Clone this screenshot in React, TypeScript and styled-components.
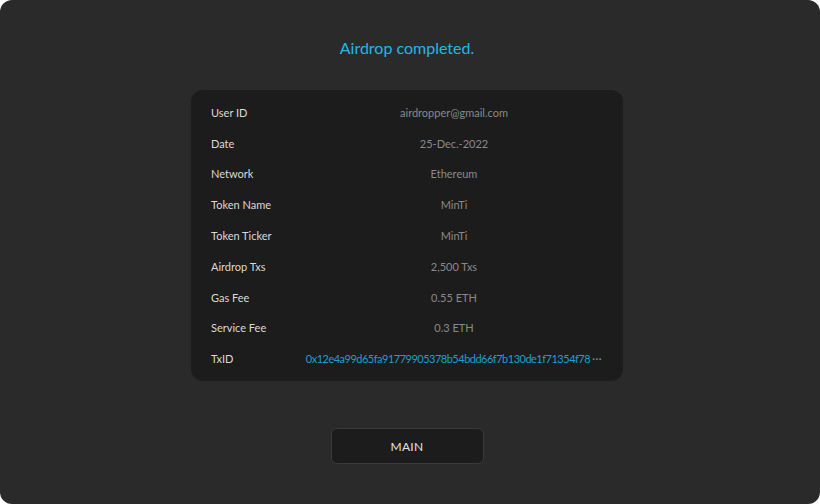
import React from 'react';
import styled, { createGlobalStyle } from 'styled-components';

const GlobalStyle = createGlobalStyle`
  html, body {
    margin: 0;
    padding: 0;
    background: #ffffff;
  }
  body {
    font-family: Lato, 'Noto Sans', sans-serif;
  }
`;

const Frame = styled.div`
  box-sizing: border-box;
  width: 820px;
  height: 504px;
  background: #2a2a2a;
  border-radius: 12px;
  display: flex;
  flex-direction: column;
  align-items: center;
  padding: 37px 6px 0 0;
`;

const Title = styled.h1`
  margin: 0;
  font-size: 16px;
  line-height: 22px;
  font-weight: 400;
  color: #27b5e6;
`;

const Card = styled.div`
  box-sizing: border-box;
  width: 432px;
  margin-top: 31px;
  padding: 7px 20px;
  background: #1c1c1c;
  border-radius: 12px;
  display: grid;
  grid-template-columns: 94px 1fr;
  grid-auto-rows: 30.8px;
  align-items: center;
`;

const Label = styled.div`
  font-size: 11px;
  color: #dadada;
`;

const Value = styled.div<{ $link?: boolean }>`
  font-size: 11px;
  text-align: center;
  white-space: nowrap;
  color: ${(p) => (p.$link ? '#1e9fd2' : '#8a8a8a')};
  letter-spacing: ${(p) => (p.$link ? '-0.5px' : '0')};
`;

const More = styled.span`
  margin-left: 2px;
  letter-spacing: 0.5px;
  color: #6f97ab;
`;

const MainButton = styled.button`
  margin-top: 47px;
  width: 153px;
  height: 36px;
  background: #1c1c1c;
  border: 1px solid #3a3a3a;
  border-radius: 6px;
  color: #e2e2e2;
  font-family: Lato, 'Noto Sans', sans-serif;
  font-size: 12px;
  font-weight: 400;
  letter-spacing: 0.3px;
  cursor: pointer;
`;

const rows: { label: string; value: string; link?: boolean }[] = [
  { label: 'User ID', value: 'airdropper@gmail.com' },
  { label: 'Date', value: '25-Dec.-2022' },
  { label: 'Network', value: 'Ethereum' },
  { label: 'Token Name', value: 'MinTi' },
  { label: 'Token Ticker', value: 'MinTi' },
  { label: 'Airdrop Txs', value: '2,500 Txs' },
  { label: 'Gas Fee', value: '0.55 ETH' },
  { label: 'Service Fee', value: '0.3 ETH' },
  {
    label: 'TxID',
    value: '0x12e4a99d65fa91779905378b54bdd66f7b130de1f71354f78',
    link: true
  }
];

export default function App() {
  return (
    <>
      <GlobalStyle />
      <Frame>
        <Title>Airdrop completed.</Title>
        <Card>
          {rows.map((row) => (
            <React.Fragment key={row.label}>
              <Label>{row.label}</Label>
              <Value $link={row.link}>
                {row.value}
                {row.link && <More>···</More>}
              </Value>
            </React.Fragment>
          ))}
        </Card>
        <MainButton>MAIN</MainButton>
      </Frame>
    </>
  );
}
